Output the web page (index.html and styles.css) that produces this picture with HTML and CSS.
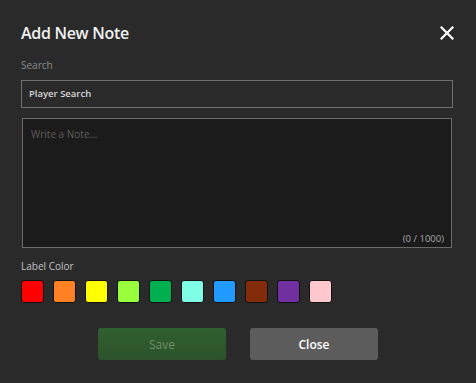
FILE: index.html
```html
<!DOCTYPE html>
<html lang="en">
<head>
  <meta charset="UTF-8">
  <title>Add New Note</title>
  <link rel="stylesheet" href="styles.css">
</head>
<body>

<div class="modal">
  <div class="modal-header">
    <h1>Add New Note</h1>
    <button class="close-x" aria-label="Close">
      <svg width="14" height="14" viewBox="0 0 14 14"><path d="M1.5 1.5 L12.5 12.5 M12.5 1.5 L1.5 12.5" stroke="#fff" stroke-width="2.2" stroke-linecap="square"/></svg>
    </button>
  </div>

  <label class="field-label" for="playerSearch">Search</label>
  <div class="search-box" id="playerSearch">Player Search</div>

  <div class="note-box">
    <span class="placeholder">Write a Note...</span>
    <span class="counter">(0 / 1000)</span>
  </div>

  <div class="color-label">Label Color</div>
  <div class="swatches">
    <span class="swatch red"></span>
    <span class="swatch orange"></span>
    <span class="swatch yellow"></span>
    <span class="swatch lime"></span>
    <span class="swatch green"></span>
    <span class="swatch aqua"></span>
    <span class="swatch blue"></span>
    <span class="swatch brown"></span>
    <span class="swatch purple"></span>
    <span class="swatch pink"></span>
  </div>

  <div class="actions">
    <button class="btn btn-save" disabled>Save</button>
    <button class="btn btn-close">Close</button>
  </div>
</div>

</body>
</html>
```

FILE: styles.css
```css
body {
  margin: 0;
  background-color: #2a2a2a;
  font-family: 'Open Sans', sans-serif;
  color: #ddd;
}

.modal {
  padding: 18px 23px 0 21px;
}

.modal-header {
  display: flex;
  justify-content: space-between;
  align-items: center;
  height: 30px;
}

h1 {
  margin: 0;
  font-size: 16px;
  font-weight: 600;
  letter-spacing: -0.3px;
  color: #f2f2f2;
}

.close-x {
  background: none;
  border: none;
  padding: 0;
  width: 14px;
  height: 14px;
  margin-right: -1px;
  cursor: pointer;
}

.field-label {
  display: block;
  margin-top: 10px;
  font-size: 10px;
  color: #8a8a8a;
}

.search-box {
  margin-top: 8px;
  height: 26px;
  line-height: 26px;
  padding: 0 7px;
  border: 1px solid #707070;
  font-size: 9.5px;
  font-weight: 600;
  color: #d8d8d8;
}

.note-box {
  position: relative;
  margin: 10px 1px 0 1px;
  height: 128px;
  background-color: #1b1b1b;
  border: 1px solid #6a6a6a;
}

.placeholder {
  display: block;
  padding: 8px 8px;
  font-size: 10px;
  color: #5e5e5e;
}

.counter {
  position: absolute;
  right: 7px;
  bottom: 2px;
  font-size: 9.5px;
  color: #a8a8a8;
}

.color-label {
  margin-top: 11px;
  font-size: 10px;
  color: #c4c4c4;
}

.swatches {
  display: flex;
  gap: 9px;
  margin-top: 7px;
}

.swatch {
  width: 21px;
  height: 21px;
  border: 1px solid #111;
  border-radius: 3px;
}

.red { background-color: #ff0000; }
.orange { background-color: #ff8124; }
.yellow { background-color: #ffff00; }
.lime { background-color: #99ff3d; }
.green { background-color: #00b050; }
.aqua { background-color: #7fffe6; }
.blue { background-color: #219bff; }
.brown { background-color: #832c0c; }
.purple { background-color: #7030a0; }
.pink { background-color: #ffc7ce; }

.actions {
  display: flex;
  justify-content: center;
  gap: 24px;
  margin-top: 25px;
  padding-left: 2px;
}

.btn {
  width: 128px;
  height: 32px;
  border: none;
  border-radius: 3px;
  font-family: 'Open Sans', sans-serif;
  font-size: 12px;
  font-weight: 600;
}

.btn-save {
  background: linear-gradient(#306030, #2c5229);
  color: #6e8f69;
  font-weight: 400;
}

.btn-close {
  background-color: #5c5c5c;
  color: #fff;
  cursor: pointer;
}
```
